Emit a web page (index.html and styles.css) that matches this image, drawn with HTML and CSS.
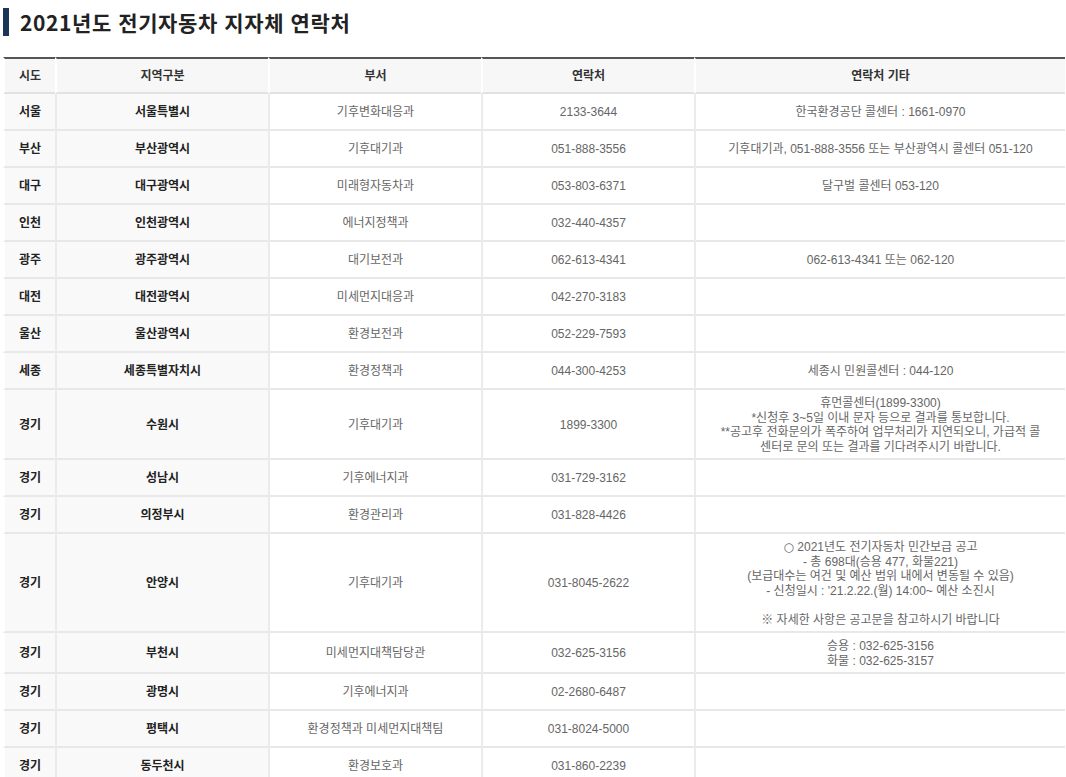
FILE: index.html
```html
<!DOCTYPE html>
<html lang="ko">
<head>
<meta charset="utf-8">
<title>2021년도 전기자동차 지자체 연락처</title>
<link rel="stylesheet" href="styles.css">
</head>
<body>
<div class="page">
  <h2 class="title">2021년도 전기자동차 지자체 연락처</h2>
  <table class="contacts">
    <colgroup>
      <col class="c-sido"><col class="c-region"><col class="c-dept"><col class="c-tel"><col class="c-etc">
    </colgroup>
    <thead>
      <tr><th>시도</th><th>지역구분</th><th>부서</th><th>연락처</th><th>연락처 기타</th></tr>
    </thead>
    <tbody>
      <tr><td class="b">서울</td><td class="b">서울특별시</td><td>기후변화대응과</td><td>2133-3644</td><td>한국환경공단 콜센터 : 1661-0970</td></tr>
      <tr><td class="b">부산</td><td class="b">부산광역시</td><td>기후대기과</td><td>051-888-3556</td><td>기후대기과, 051-888-3556 또는 부산광역시 콜센터 051-120</td></tr>
      <tr><td class="b">대구</td><td class="b">대구광역시</td><td>미래형자동차과</td><td>053-803-6371</td><td>달구벌 콜센터 053-120</td></tr>
      <tr><td class="b">인천</td><td class="b">인천광역시</td><td>에너지정책과</td><td>032-440-4357</td><td></td></tr>
      <tr><td class="b">광주</td><td class="b">광주광역시</td><td>대기보전과</td><td>062-613-4341</td><td>062-613-4341 또는 062-120</td></tr>
      <tr><td class="b">대전</td><td class="b">대전광역시</td><td>미세먼지대응과</td><td>042-270-3183</td><td></td></tr>
      <tr><td class="b">울산</td><td class="b">울산광역시</td><td>환경보전과</td><td>052-229-7593</td><td></td></tr>
      <tr><td class="b">세종</td><td class="b">세종특별자치시</td><td>환경정책과</td><td>044-300-4253</td><td>세종시 민원콜센터 : 044-120</td></tr>
      <tr><td class="b">경기</td><td class="b">수원시</td><td>기후대기과</td><td>1899-3300</td><td class="nw">휴먼콜센터(1899-3300)<br>*신청후 3~5일 이내 문자 등으로 결과를 통보합니다.<br>**공고후 전화문의가 폭주하여 업무처리가 지연되오니, 가급적 콜<br>센터로 문의 또는 결과를 기다려주시기 바랍니다.</td></tr>
      <tr><td class="b">경기</td><td class="b">성남시</td><td>기후에너지과</td><td>031-729-3162</td><td></td></tr>
      <tr><td class="b">경기</td><td class="b">의정부시</td><td>환경관리과</td><td>031-828-4426</td><td></td></tr>
      <tr><td class="b">경기</td><td class="b">안양시</td><td>기후대기과</td><td>031-8045-2622</td><td class="nw"><span class="mark">○</span> 2021년도 전기자동차 민간보급 공고<br>- 총 698대(승용 477, 화물221)<br>(보급대수는 여건 및 예산 범위 내에서 변동될 수 있음)<br>- 신청일시 : '21.2.22.(월) 14:00~ 예산 소진시<br><br>※ 자세한 사항은 공고문을 참고하시기 바랍니다</td></tr>
      <tr><td class="b">경기</td><td class="b">부천시</td><td>미세먼지대책담당관</td><td>032-625-3156</td><td>승용 : 032-625-3156<br>화물 : 032-625-3157</td></tr>
      <tr><td class="b">경기</td><td class="b">광명시</td><td>기후에너지과</td><td>02-2680-6487</td><td></td></tr>
      <tr><td class="b">경기</td><td class="b">평택시</td><td>환경정책과 미세먼지대책팀</td><td>031-8024-5000</td><td></td></tr>
      <tr><td class="b">경기</td><td class="b">동두천시</td><td>환경보호과</td><td>031-860-2239</td><td></td></tr>
    </tbody>
  </table>
</div>
</body>
</html>
```
FILE: styles.css
```css
html, body {
  margin: 0;
  padding: 0;
  background: #fff;
}
body {
  font-family: "Liberation Sans", "Noto Sans CJK KR", sans-serif;
  font-size: 12px;
  color: #666;
}
.page {
  padding: 8px 1px 0 3px;
}
.title {
  margin: 0 0 21px 0;
  height: 28px;
  border-left: 6px solid #1d3557;
  padding-left: 11px;
  font-family: "Noto Sans CJK KR", sans-serif;
  font-size: 21px;
  font-weight: 700;
  line-height: 28px;
  color: #222;
  letter-spacing: 0.6px;
}
.contacts {
  width: 100%;
  border-collapse: separate;
  border-spacing: 0;
  table-layout: fixed;
}
.c-sido { width: 52px; }
.c-region { width: 213px; }
.c-dept { width: 213px; }
.c-tel { width: 213px; }
.contacts th,
.contacts td {
  text-align: center;
  vertical-align: middle;
  line-height: 14.5px;
  padding: 6px 2px 4px;
  box-sizing: border-box;
}
.contacts th {
  height: 37px;
  background: #f7f7f7;
  border-top: 2px solid #555;
  border-left: 2px solid #fff;
  border-bottom: 2px solid #e2e2e2;
  font-weight: 700;
  color: #333;
}
.contacts td {
  height: 37px;
  border-left: 2px solid #ebebeb;
  border-bottom: 2px solid #e8e8e8;
  color: #666;
}
.contacts td:first-child {
  border-left-color: #fff;
}
.contacts td.b {
  background: #f9f9f9;
  font-weight: 700;
  color: #222;
}
.contacts td.nw {
  white-space: nowrap;
}
.mark {
  font-family: "DejaVu Sans", sans-serif;
  font-size: 12px;
}
```
